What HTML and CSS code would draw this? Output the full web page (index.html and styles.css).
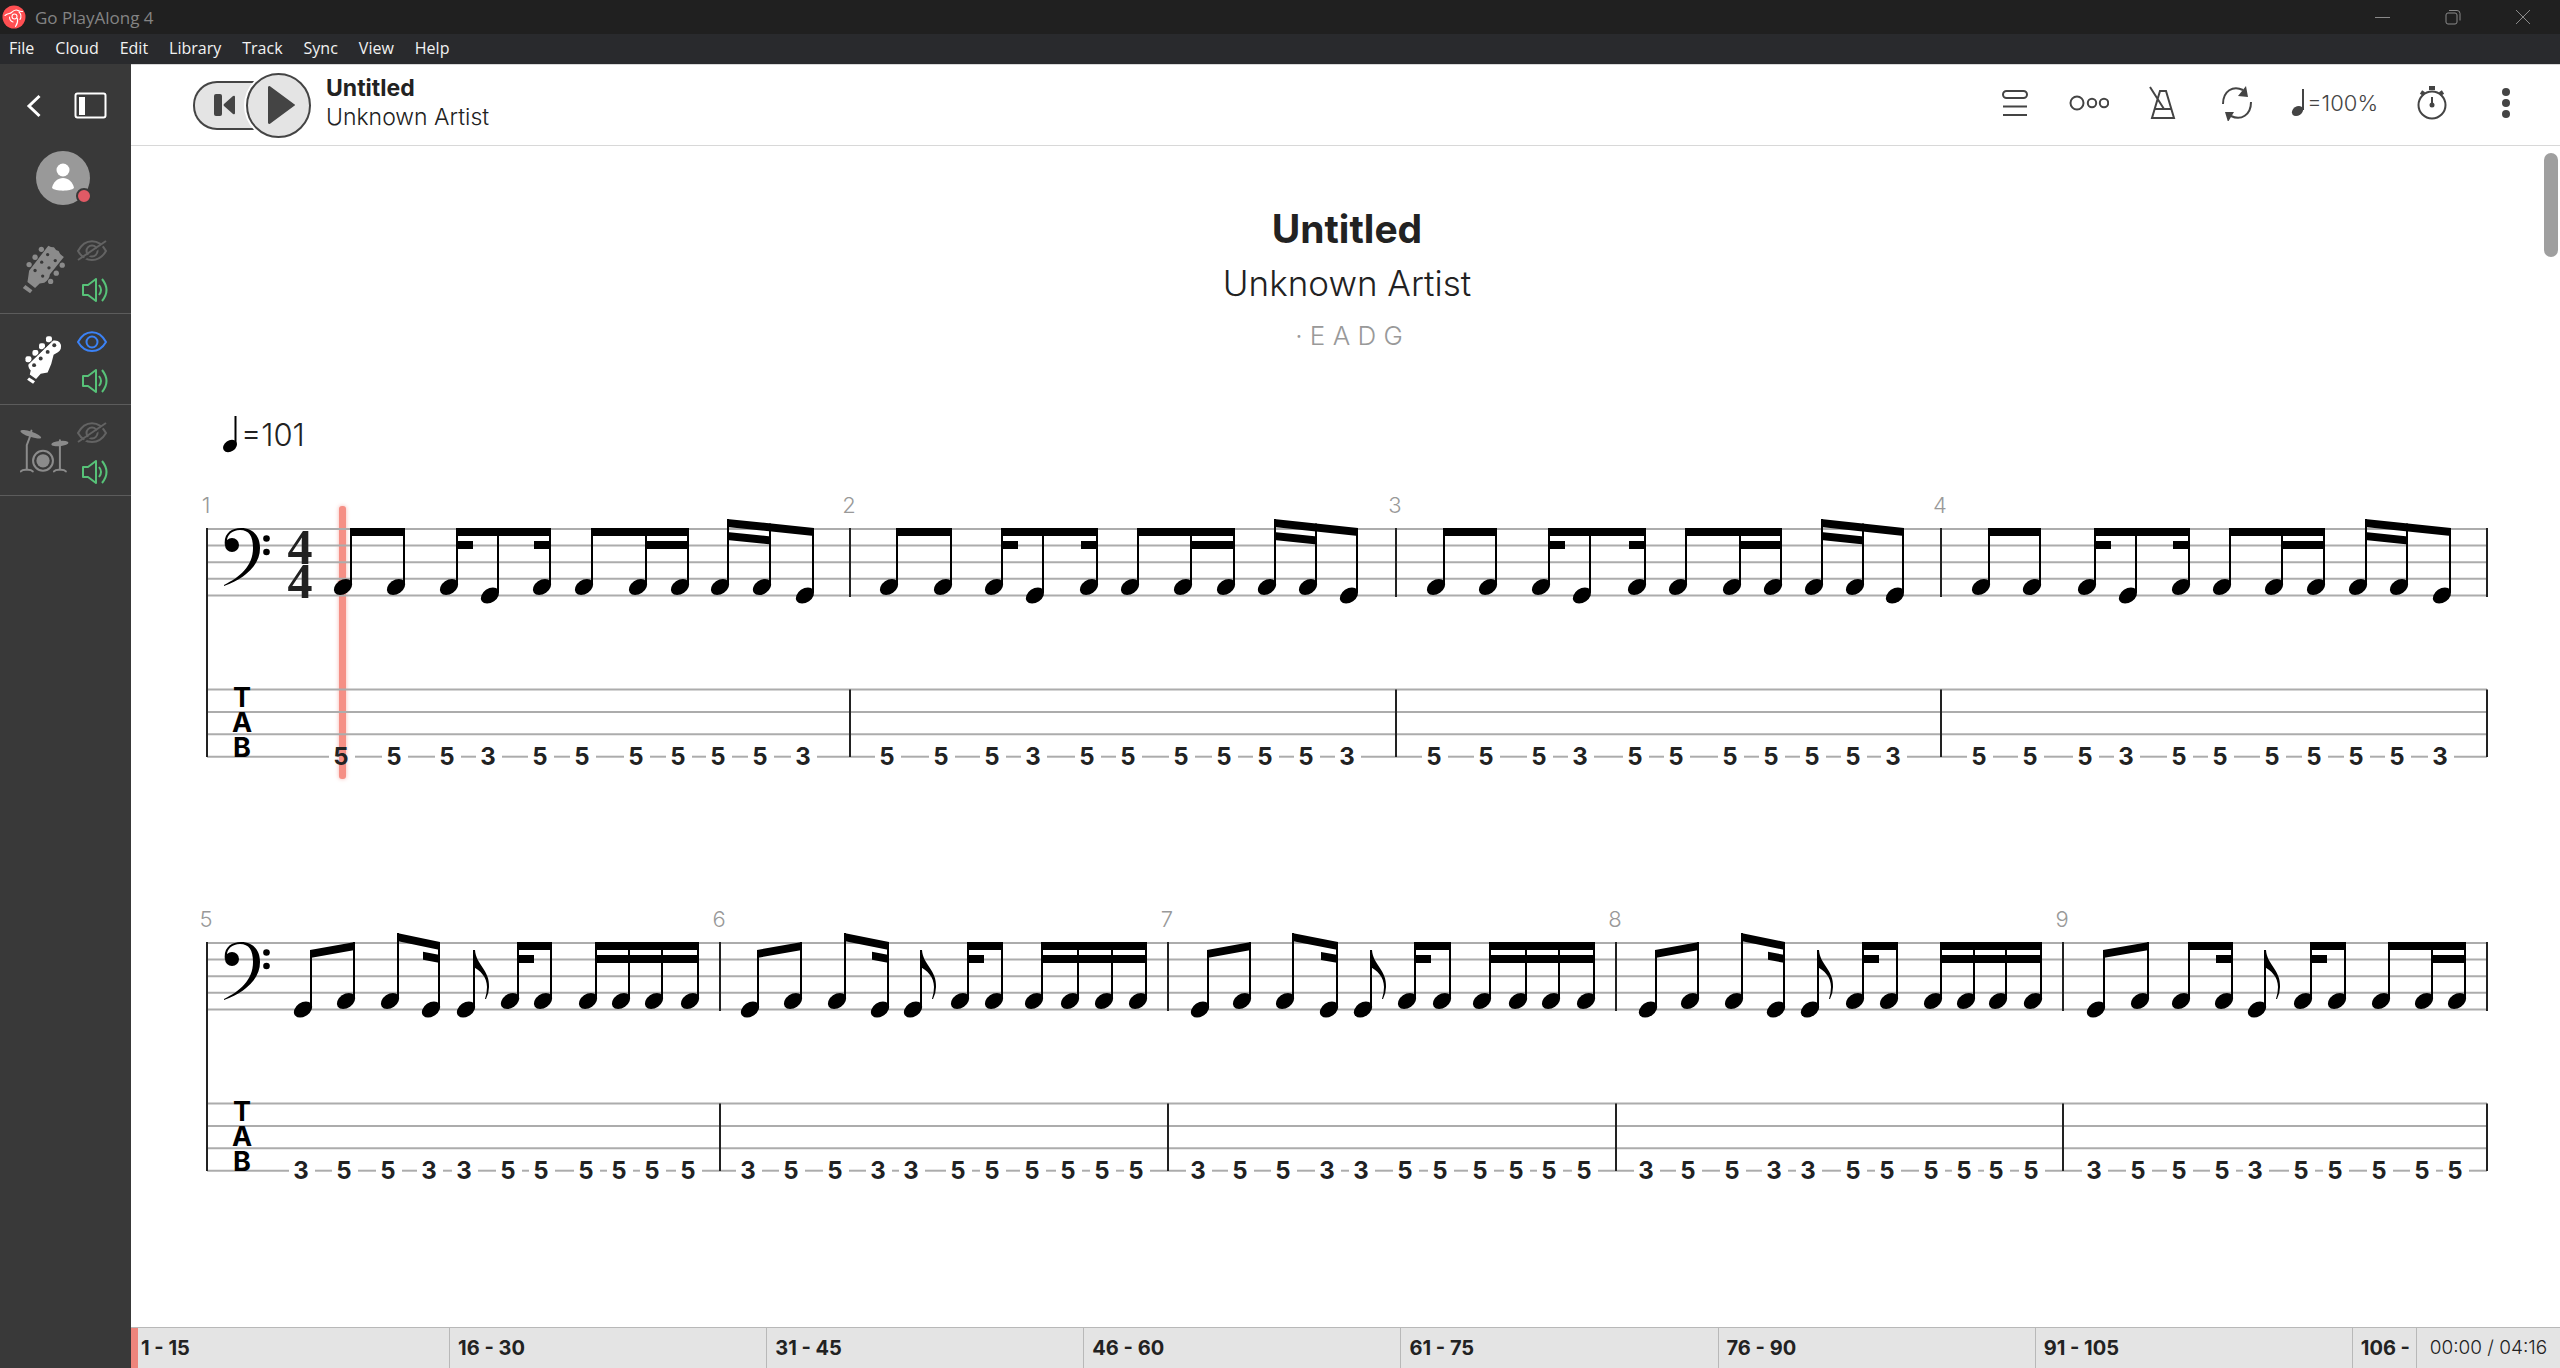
FILE: index.html
```html
<!DOCTYPE html>
<html lang="en">
<head>
    <meta charset="UTF-8">
    <meta name="viewport" content="width=device-width, initial-scale=1.0">
    <title>Go PlayAlong 4</title>
    <link rel="stylesheet" href="styles.css">
</head>
<body>
    <div class="titlebar">
        <svg class="app-logo" width="24" height="24" viewBox="0 0 24 24">
            <circle cx="12" cy="12" r="11.5" fill="#ff4f52"/>
            <g fill="none" stroke="#fff" stroke-width="1.1" stroke-linecap="round">
                <circle cx="12.500" cy="11.500" r="2.500"/>
                <path d="M3 10.500C6 8 8 9 9.500 7.500S13 4 16 5.500s4 1 4.500 1"/>
                <path d="M17 7c2 2 2.500 5 1 7.500M7.500 12c0 3 2 4.500 3.500 5M15.500 13.500c.5 3-.5 6-2 8"/>
            </g>
        </svg>
        <span class="app-name">Go PlayAlong 4</span>
        <div class="window-buttons">
            <button aria-label="Minimize"><svg width="16" height="16" viewBox="0 0 16 16"><path d="M0 8.500h15"/></svg></button>
            <button aria-label="Restore"><svg width="16" height="16" viewBox="0 0 16 16"><rect x="1" y="4" width="11" height="11" rx="2"/><path d="M4 1.500h8a3 3 0 0 1 3 3v7"/></svg></button>
            <button aria-label="Close"><svg width="16" height="16" viewBox="0 0 16 16"><path d="M1 1l14 14M15 1L1 15"/></svg></button>
        </div>
    </div>

    <nav class="menubar">
        <button>File</button>
        <button>Cloud</button>
        <button>Edit</button>
        <button>Library</button>
        <button>Track</button>
        <button>Sync</button>
        <button>View</button>
        <button>Help</button>
    </nav>

    <div class="app">
        <aside class="sidebar">
            <div class="side-top">
                <button aria-label="Back"><svg width="16" height="24" viewBox="0 0 16 24"><path d="M13.500 2L3 12l10.500 10" fill="none" stroke="#fff" stroke-width="3"/></svg></button>
                <button aria-label="Toggle panel"><svg width="34" height="28" viewBox="0 0 34 28"><rect x="1.500" y="1.500" width="30" height="24" rx="2" fill="none" stroke="#fff" stroke-width="2"/><path d="M5 5h6v18H5z" fill="#fff"/></svg></button>
            </div>
            <button class="avatar" aria-label="Account">
                <svg width="54" height="54" viewBox="0 0 54 54">
                    <circle cx="27" cy="27" r="27" fill="#999"/>
                    <circle cx="27" cy="19" r="6.500" fill="#fff"/>
                    <path d="M16 37c1-6 6-10 11-10s10 4 11 10c-3 3.500-19 3.500-22 0z" fill="#fff"/>
                </svg>
                <span class="status-dot"></span>
            </button>

            <div class="track">
                <svg class="instrument" width="50" height="53" viewBox="60 127 150 160" fill="#8b8b8b">
                    <path d="M145 138q10 6 17 5 4 9 14 11 3 10 16 18l-42 52q-2 16-17 26l-14 2-14 14-23-18q3-18 5-34z"/>
                    <path d="M76 257l21 16-7 9-22-16z"/>
                    <g>
                        <circle cx="124" cy="149" r="8"/><circle cx="105" cy="173" r="8"/><circle cx="87" cy="195" r="8"/>
                        <circle cx="187" cy="197" r="8"/><circle cx="169" cy="221" r="8"/><circle cx="152" cy="246" r="8"/>
                    </g>
                    <g fill="#393939">
                        <circle cx="143" cy="165" r="5"/><circle cx="125" cy="188" r="5"/><circle cx="105" cy="213" r="5"/>
                        <circle cx="166" cy="183" r="5"/><circle cx="147" cy="205" r="5"/><circle cx="128" cy="230" r="5"/>
                    </g>
                </svg>
                <div class="track-controls">
                    <button aria-label="Show guitar"><svg class="hidden-eye" width="32" height="22" viewBox="0 0 32 22"><path d="M1 11C8-2 22-2 29 11 22 23 8 23 1 11z"/><circle cx="15" cy="11" r="5.500"/><path class="gap" d="M3 22L30 2"/><path d="M1 20L29 1"/></svg></button>
                    <button aria-label="Mute guitar"><svg class="speaker" width="32" height="24" viewBox="0 0 32 24"><path d="M6 7h5l8-6v22l-8-6H6zM22 7q4 5 0 10M25 1q9 11 0 22"/></svg></button>
                </div>
            </div>

            <div class="track">
                <svg class="instrument" width="50" height="53" viewBox="60 400 150 160" fill="#fff">
                    <path d="M160 423a19 19 0 0 1 14 35l-13 8q-5 28-18 53l-21 4-14 16-19-14 3-12q-9-10-7-19z"/>
                    <path d="M87 534l18 12-6 7-18-12z"/>
                    <rect x="138" y="410" width="18" height="18" rx="6"/>
                    <rect x="117" y="431" width="18" height="18" rx="6"/>
                    <rect x="97" y="451" width="18" height="18" rx="6"/>
                    <rect x="76" y="470" width="18" height="18" rx="6"/>
                    <path d="M155 424l-71 70" stroke="#393939" stroke-width="3"/>
                    <g fill="#393939">
                        <circle cx="163" cy="437" r="6"/><circle cx="143" cy="457" r="6"/>
                        <circle cx="122" cy="477" r="6"/><circle cx="102" cy="497" r="6"/>
                    </g>
                </svg>
                <div class="track-controls">
                    <button aria-label="Hide bass"><svg class="eye" width="32" height="22" viewBox="0 0 32 22"><path d="M1 11C8-2 22-2 29 11 22 23 8 23 1 11z"/><circle cx="15" cy="11" r="5.500"/></svg></button>
                    <button aria-label="Mute bass"><svg class="speaker" width="32" height="24" viewBox="0 0 32 24"><path d="M6 7h5l8-6v22l-8-6H6zM22 7q4 5 0 10M25 1q9 11 0 22"/></svg></button>
                </div>
            </div>

            <div class="track">
                <svg class="instrument" width="50" height="53" viewBox="60 673 150 160" fill="#8b8b8b">
                    <ellipse cx="92" cy="704" rx="33" ry="8" transform="rotate(18 92 704)"/>
                    <ellipse cx="180" cy="732" rx="26" ry="8" transform="rotate(-6 180 732)"/>
                    <circle cx="129" cy="784" r="20"/>
                    <g fill="none" stroke="#8b8b8b" stroke-width="6" stroke-linecap="round">
                        <circle cx="129" cy="784" r="30"/>
                        <path d="M94 693l-2 12-12 32v74M62 816q5-6 18-5 13-1 18 5"/>
                        <path d="M180 722v89M162 816q5-6 18-5 13-1 18 5"/>
                    </g>
                </svg>
                <div class="track-controls">
                    <button aria-label="Show drums"><svg class="hidden-eye" width="32" height="22" viewBox="0 0 32 22"><path d="M1 11C8-2 22-2 29 11 22 23 8 23 1 11z"/><circle cx="15" cy="11" r="5.500"/><path class="gap" d="M3 22L30 2"/><path d="M1 20L29 1"/></svg></button>
                    <button aria-label="Mute drums"><svg class="speaker" width="32" height="24" viewBox="0 0 32 24"><path d="M6 7h5l8-6v22l-8-6H6zM22 7q4 5 0 10M25 1q9 11 0 22"/></svg></button>
                </div>
            </div>
        </aside>

        <main class="main">
            <header class="toolbar">
                <div class="transport">
                    <button class="rewind" aria-label="Back to start"><svg width="22" height="22" viewBox="0 0 22 22" fill="#444"><rect x="0" y="0" width="8" height="22" rx="2"/><path d="M21 3v16q0 2-2 1L10 12q-1-1 0-2l9-8q2-1 2 1z"/></svg></button>
                    <button class="play" aria-label="Play"><svg width="28" height="38" viewBox="0 0 28 38" fill="#444"><path d="M0 1q1-2 3 0l23 17q2 1 0 2L3 37q-2 2-3 0z"/></svg></button>
                </div>
                <div class="song">
                    <div class="song-title">Untitled</div>
                    <div class="song-artist">Unknown Artist</div>
                </div>
                <div class="tools">
                    <button aria-label="Layout"><svg width="28" height="28" viewBox="0 0 28 28"><rect x="2" y="2" width="24" height="7" rx="3.500"/><path d="M2 17.500h24M2 26h24"/></svg></button>
                    <button aria-label="Count in"><svg width="40" height="20" viewBox="0 0 40 20"><circle cx="8" cy="10" r="6.500"/><circle cx="23" cy="10" r="4.200"/><circle cx="35" cy="10" r="4.200"/></svg></button>
                    <button aria-label="Metronome"><svg width="28" height="34" viewBox="0 0 28 34"><path d="M11 5h6l8 27H3zM6 23h16M1 1l14 22"/></svg></button>
                    <button aria-label="Loop"><svg width="32" height="36" viewBox="0 0 32 36"><path d="M2 19C2 6 12 0 22 5M30 17c0 13-10 19-20 14"/><path class="solid" d="M25 1l2 11-10-1zM4 27l9 0-6 10z"/></svg></button>
                    <button class="tempo-button"><svg width="16" height="28" viewBox="0 0 16 28"><ellipse class="solid" cx="6.500" cy="22" rx="6" ry="4.500" transform="rotate(-35 6.500 22)"/><path d="M12 21V0"/></svg>=100%</button>
                    <button aria-label="Timer"><svg width="32" height="36" viewBox="0 0 32 36"><circle cx="16" cy="20" r="13.500"/><path d="M16 20v-8"/><circle class="solid" cx="16" cy="20" r="2.500"/><path class="thick" d="M13 3h6M5 7l3 2M27 7l-3 2"/></svg></button>
                    <button aria-label="More"><svg width="12" height="32" viewBox="0 0 12 32"><circle class="solid" cx="6" cy="5" r="4"/><circle class="solid" cx="6" cy="16" r="4"/><circle class="solid" cx="6" cy="27" r="4"/></svg></button>
                </div>
            </header>

            <section class="sheet">
                <h1>Untitled</h1>
                <h2>Unknown Artist</h2>
                <div class="tuning">· E A D G</div>
                <div class="tempo">
                    <svg width="16" height="38" viewBox="0 0 16 38"><ellipse cx="7" cy="31" rx="7.500" ry="5.500" transform="rotate(-35 7 31)"/><path d="M12.500 30V1" stroke="#000" stroke-width="2"/></svg>
                    <span>=101</span>
                </div>
                <div id="score"></div>
                <div class="scroll-thumb"></div>
            </section>

            <footer class="timeline">
                <div class="timeline-cursor"></div>
                <div class="segments" id="segments"></div>
                <div class="time">00:00 / 04:16</div>
            </footer>
        </main>
    </div>

    <script src="score.js"></script>
</body>
</html>
```

FILE: styles.css
```css
* {
    box-sizing: border-box;
}
body {
    margin: 0;
    height: 100vh;
    display: flex;
    flex-direction: column;
    overflow: hidden;
    background: #fff;
    color: #222;
    font-family: Inter, "Open Sans", sans-serif;
}
button {
    display: flex;
    align-items: center;
    justify-content: center;
    padding: 0;
    border: 0;
    background: none;
    color: inherit;
    font: inherit;
}
svg {
    display: block;
    flex: none;
}

/* window chrome */
.titlebar {
    display: flex;
    align-items: center;
    height: 34px;
    padding: 0 2px;
    background: #202020;
    color: #848484;
    font-family: "Open Sans", sans-serif;
    font-size: 17px;
}
.app-name {
    margin-left: 9px;
}
.window-buttons {
    display: flex;
    margin-left: auto;
}
.window-buttons button {
    width: 70px;
    height: 34px;
}
.window-buttons svg {
    fill: none;
    stroke: #8a8a8a;
    stroke-width: 1;
}
.menubar {
    display: flex;
    gap: 21px;
    height: 30px;
    padding: 0 0 2px 9px;
    background: #292a2d;
    color: #f2f2f2;
    font-family: "Open Sans", sans-serif;
    font-size: 16px;
}

.app {
    display: flex;
    flex: 1;
    min-height: 0;
}

/* sidebar */
.sidebar {
    flex: none;
    width: 131px;
    background: #393939;
}
.side-top {
    display: flex;
    align-items: center;
    justify-content: space-between;
    height: 84px;
    padding: 0 23px 0 26px;
}
.avatar {
    position: relative;
    margin: 3px 0 18px 36px;
}
.status-dot {
    position: absolute;
    right: -2px;
    bottom: 1px;
    width: 16px;
    height: 16px;
    border: 2px solid #393939;
    border-radius: 50%;
    background: #e05a65;
}
.track {
    display: flex;
    align-items: center;
    gap: 7px;
    height: 91px;
    padding-left: 20px;
    border-bottom: 1px solid #5c5c5c;
}
.track-controls {
    display: flex;
    flex-direction: column;
    gap: 16px;
    padding-top: 6px;
}
.track-controls svg {
    fill: none;
    stroke-width: 2;
    stroke-linejoin: round;
}
.hidden-eye {
    stroke: #636363;
}
.hidden-eye .gap {
    stroke: #393939;
}
.eye {
    stroke: #3b82f6;
}
.speaker {
    stroke: #57c278;
}

/* toolbar */
.main {
    display: flex;
    flex-direction: column;
    flex: 1;
    min-width: 0;
}
.toolbar {
    display: flex;
    align-items: center;
    height: 82px;
    padding: 0 34px 0 62px;
    border-top: 1px solid #d8d8d8;
    border-bottom: 1px solid #d8d8d8;
}
.transport {
    display: flex;
    align-items: center;
}
.rewind {
    width: 62px;
    height: 49px;
    border: 2px solid #444;
    border-right: 0;
    border-radius: 24px 0 0 24px;
    background: #e4e4e4;
}
.play {
    width: 65px;
    height: 65px;
    margin-left: -9px;
    padding-left: 7px;
    border: 2px solid #444;
    border-radius: 50%;
    background: #e4e4e4;
    box-shadow: 0 0 0 2px #fff;
}
.song {
    margin-left: 15px;
    padding-bottom: 4px;
    font-size: 23px;
    line-height: 29px;
}
.song-title {
    font-weight: 700;
}
.song-artist {
    font-weight: 300;
}
.tools {
    display: flex;
    align-items: center;
    gap: 34px;
    margin-left: auto;
    padding-bottom: 4px;
}
.tools button {
    min-width: 40px;
    height: 40px;
    color: #444;
    font-size: 22px;
    font-weight: 300;
}
.tools svg {
    fill: none;
    stroke: #444;
    stroke-width: 2;
}
.tools .solid {
    fill: #444;
    stroke: none;
}
.tools .thick {
    stroke-width: 4;
}

/* sheet */
.sheet {
    position: relative;
    flex: 1;
    min-height: 0;
    overflow: hidden;
    padding: 56px 66px 0 69px;
}
.sheet h1,
.sheet h2 {
    margin: 0;
    text-align: center;
    line-height: 54px;
}
.sheet h1 {
    font-size: 39px;
    font-weight: 700;
}
.sheet h2 {
    font-size: 35px;
    font-weight: 300;
}
.tuning {
    padding-left: 4px;
    color: #999;
    font-size: 26px;
    font-weight: 300;
    line-height: 52px;
    text-align: center;
}
.tempo {
    display: flex;
    align-items: center;
    gap: 2px;
    height: 40px;
    margin: 52px 0 26px;
    padding-left: 23px;
    font-size: 31px;
    font-weight: 300;
}
.system {
    width: 100%;
    height: auto;
    overflow: visible;
}
.system .line {
    stroke: #acacac;
    stroke-width: 2;
}
.system .bar {
    stroke: #222;
    stroke-width: 2;
}
.system .stem {
    stroke: #000;
    stroke-width: 2;
}
.system text {
    text-anchor: middle;
}
.system .number {
    fill: #999;
    font-size: 22px;
    font-weight: 300;
}
.system .fret {
    fill: #222;
    font-size: 24px;
    font-weight: 700;
}
.system .tab {
    font-size: 27px;
    font-weight: 700;
}
.system .meter {
    font-family: "Liberation Serif", serif;
    font-size: 50px;
    font-weight: 700;
    fill: #222;
}
.system .cursor {
    fill: #f58f85;
    filter: drop-shadow(0 0 2px #f5b5af);
}
.scroll-thumb {
    position: absolute;
    top: 7px;
    right: 2px;
    width: 14px;
    height: 104px;
    border-radius: 7px;
    background: #9f9f9f;
}

/* timeline */
.timeline {
    position: relative;
    display: flex;
    height: 41px;
    border-top: 1px solid #b8b8b8;
    background: #e4e4e4;
    line-height: 40px;
    white-space: nowrap;
}
.timeline-cursor {
    position: absolute;
    left: 0;
    width: 7px;
    height: 100%;
    background: #ee857c;
}
.segments {
    display: flex;
    flex: 1;
    min-width: 0;
    padding-left: 2px;
    font-size: 20px;
    font-weight: 700;
}
.segment {
    flex-basis: 0;
    min-width: 0;
    overflow: hidden;
    text-indent: 8px;
}
.segment + .segment,
.time {
    border-left: 1px solid #b8b8b8;
}
.time {
    width: 144px;
    font-size: 19px;
    font-weight: 300;
    text-align: center;
}
```

FILE: score.js
```js
const STAFF_TOP = 49;
const STAFF_GAP = 16.6;
const TAB_TOP = 209.5;
const TAB_GAP = 22.4;
const TAB_BOTTOM = TAB_TOP + TAB_GAP * 3;

// head height on the staff for each fret of the A/E string
const HEAD_Y = { 5: 107, 3: 115.5 };

// beam groups: n = number of notes, y = top at both ends, second = 16th beams [from, to],
// 'l' / 'r' = short beam to the left / right of that note
const GROOVE = [
    { n: 2, y: [48, 48] },
    { n: 3, y: [48, 48], second: [[0, 'r'], [2, 'l']] },
    { n: 3, y: [48, 48], second: [[1, 2]] },
    { n: 3, y: [39, 48], second: [[0, 1]] }
];
const VERSE = [
    { n: 2, y: [56, 48] },
    { n: 2, y: [39, 48], second: [[1, 'l']] },
    { n: 1, flag: true, y: [56, 56] },
    { n: 2, y: [48, 48], second: [[0, 'r']] },
    { n: 4, y: [48, 48], second: [[0, 3]] }
];
const VERSE_END = [
    { n: 2, y: [56, 48] },
    { n: 2, y: [48, 48], second: [[1, 'l']] },
    { n: 1, flag: true, y: [56, 56] },
    { n: 2, y: [48, 48], second: [[0, 'r']] },
    { n: 3, y: [48, 48], second: [[1, 2]] }
];

const systems = [
    {
        meter: true, cursor: 139,
        measures: [
            { no: 1, x: 7, end: 650, frets: '55535555553', groups: GROOVE, stems: [151, 204, 257, 298, 350, 392, 446, 488, 528, 570, 613] },
            { no: 2, x: 650, end: 1196, frets: '55535555553', groups: GROOVE, stems: [697, 751, 802, 843, 897, 938, 991, 1034, 1075, 1116, 1157] },
            { no: 3, x: 1196, end: 1741, frets: '55535555553', groups: GROOVE, stems: [1244, 1296, 1349, 1390, 1445, 1486, 1540, 1581, 1622, 1663, 1703] },
            { no: 4, x: 1741, end: 2287, frets: '55535555553', groups: GROOVE, stems: [1789, 1840, 1895, 1936, 1989, 2030, 2082, 2124, 2166, 2207, 2250] }
        ]
    },
    {
        measures: [
            { no: 5, x: 7, end: 520, frets: '35533555555', groups: VERSE, stems: [111, 154, 198, 239, 274, 318, 351, 396, 429, 462, 498] },
            { no: 6, x: 520, end: 968, frets: '35533555555', groups: VERSE, stems: [558, 601, 645, 688, 721, 768, 802, 842, 878, 912, 946] },
            { no: 7, x: 968, end: 1416, frets: '35533555555', groups: VERSE, stems: [1008, 1050, 1093, 1137, 1171, 1215, 1250, 1290, 1326, 1359, 1394] },
            { no: 8, x: 1416, end: 1863, frets: '35533555555', groups: VERSE, stems: [1456, 1498, 1542, 1584, 1618, 1663, 1697, 1741, 1774, 1806, 1841] },
            { no: 9, x: 1863, end: 2287, frets: '3555355555', groups: VERSE_END, stems: [1904, 1948, 1989, 2032, 2065, 2111, 2145, 2189, 2232, 2265] }
        ]
    }
];

function line(x1, y1, x2, y2, cls) {
    return `<line class="${cls}" x1="${x1}" y1="${y1}" x2="${x2}" y2="${y2}"/>`;
}

function text(x, y, cls, value) {
    return `<text class="${cls}" x="${x}" y="${y}">${value}</text>`;
}

function beam(x1, y1, x2, y2) {
    return `<path d="M${x1 - 1} ${y1}L${x2 + 1} ${y2}V${y2 + 8}L${x1 - 1} ${y1 + 8}z"/>`;
}

function drawGroup(group, stems, frets) {
    const first = stems[0];
    const last = stems[stems.length - 1];
    const [y1, y2] = group.y;
    const topAt = x => last === first ? y1 : y1 + (y2 - y1) * (x - first) / (last - first);
    let out = '';

    stems.forEach((x, i) => {
        const y = HEAD_Y[frets[i]];
        out += `<ellipse cx="${x - 8}" cy="${y}" rx="10" ry="7" transform="rotate(-35 ${x - 8} ${y})"/>`;
        out += line(x, topAt(x), x, y - 3, 'stem');
    });

    if (group.flag) {
        return out + `<path d="M${first - 1} ${y1}h2c1 15 15 20 14 37q0 6-3 12h-1q2-6 2-12c0-10-7-17-14-20z"/>`;
    }

    out += beam(first, y1, last, y2);
    (group.second || []).forEach(([from, to]) => {
        let a = stems[from];
        let b = stems[to];
        if (to === 'r') b = a + 15;
        if (to === 'l') { b = a; a = b - 15; }
        out += beam(a, topAt(a) + 13, b, topAt(b) + 13);
    });
    return out;
}

function drawSystem(system) {
    const left = system.measures[0].x;
    const right = system.measures[system.measures.length - 1].end;
    let out = '';

    if (system.cursor) {
        out += `<rect class="cursor" x="${system.cursor}" y="26" width="7" height="273" rx="3"/>`;
    }
    for (let i = 0; i < 5; i++) {
        out += line(left, STAFF_TOP + i * STAFF_GAP, right, STAFF_TOP + i * STAFF_GAP, 'line');
    }
    for (let i = 0; i < 3; i++) {
        out += line(left, TAB_TOP + i * TAB_GAP, right, TAB_TOP + i * TAB_GAP, 'line');
    }

    // the lowest string is broken around each fret number
    let from = left;
    system.measures.forEach(m => m.stems.forEach(x => {
        out += line(from, TAB_BOTTOM, x - 22, TAB_BOTTOM, 'line');
        from = x + 4;
    }));
    out += line(from, TAB_BOTTOM, right, TAB_BOTTOM, 'line');

    // bass clef
    out += '<circle cx="32" cy="65" r="7"/><circle cx="66.500" cy="58.500" r="3.300"/><circle cx="66.500" cy="72" r="3.300"/>';
    out += '<path d="M25 66C23 54 31 48 41 48c12 0 19 8 19 20 0 18-16 31-36 38v-1c16-8 29-19 29-37 0-12-4-18-13-18-8 0-13 5-13 11z"/>';
    if (system.meter) {
        out += text(100, 84, 'meter', 4) + text(100, 118, 'meter', 4);
    }
    out += text(42, 227, 'tab', 'T') + text(42, 252, 'tab', 'A') + text(42, 277, 'tab', 'B');

    out += line(left, 48, left, 277, 'bar');
    system.measures.forEach(m => {
        out += text(m.x - 1, 33, 'number', m.no);
        out += line(m.end, 48, m.end, 117, 'bar');
        out += line(m.end, TAB_TOP, m.end, 277, 'bar');

        let i = 0;
        m.groups.forEach(g => {
            out += drawGroup(g, m.stems.slice(i, i + g.n), m.frets.slice(i, i + g.n));
            i += g.n;
        });
        m.stems.forEach((x, k) => {
            out += text(x - 10, 285, 'fret', m.frets[k]);
        });
    });

    return `<svg class="system" viewBox="0 0 2294 414">${out}</svg>`;
}

document.getElementById('score').innerHTML = systems.map(drawSystem).join('');

// timeline, 15 measures per segment
const TOTAL = 108;
const segments = document.getElementById('segments');
for (let start = 1; start <= TOTAL; start += 15) {
    const end = start + 14;
    const div = document.createElement('div');
    div.className = 'segment';
    div.style.flexGrow = Math.min(15, TOTAL - start + 1);
    div.textContent = end <= TOTAL ? start + ' - ' + end : start + ' -';
    segments.appendChild(div);
}
```
